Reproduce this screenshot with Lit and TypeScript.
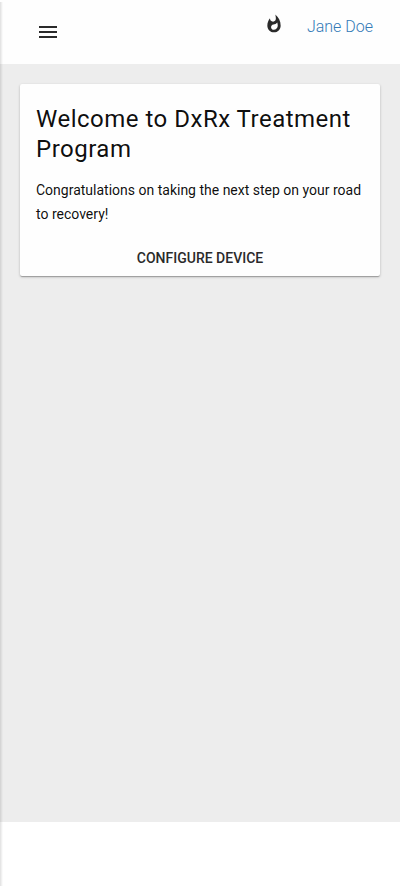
import { LitElement, html, css } from "lit";
import { customElement } from "lit/decorators.js";

@customElement("app-root")
export class AppRoot extends LitElement {
  static styles = css`
    :host { display: flex; flex-direction: column; position: relative; height: 886px; background: #fff; font-family: Roboto, sans-serif; overflow: hidden; box-sizing: border-box; }
    .edge { position: absolute; left: 0; top: 2px; bottom: 0; width: 3px; background: linear-gradient(90deg, rgba(0,0,0,.12), rgba(0,0,0,0)); }
    header { display: flex; align-items: flex-start; height: 64px; box-sizing: border-box; background: #fefefe; }
    .menu { margin: 20px 0 0 36px; }
    svg { display: block; width: 24px; height: 24px; fill: #2a2a2a; }
    .spacer { flex: 1; }
    .flame { margin-top: 14px; width: 20px; height: 20px; }
    .user { margin: 17px 27px 0 23px; font-size: 16px; line-height: 20px; font-weight: 300; color: #337ab7; text-decoration: none; }
    main { height: 758px; box-sizing: border-box; padding: 20px; background: #ededed; }
    .card { height: 192px; box-sizing: border-box; padding: 20px 16px 0; background: #fefefe; border-radius: 2px; box-shadow: 0 1px 3px rgba(0,0,0,.2), 0 1px 1px rgba(0,0,0,.14), 0 2px 1px -1px rgba(0,0,0,.12); display: flex; flex-direction: column; }
    h1 { margin: 0; font-size: 24px; line-height: 30px; font-weight: 400; letter-spacing: .5px; color: rgba(0,0,0,.95); }
    p { margin: 14px 0 0; font-size: 14px; line-height: 24px; color: rgba(0,0,0,.95); }
    .action { margin: 22px auto 0; padding: 0; border: 0; background: none; font: 500 14px/20px Roboto, sans-serif; color: #2a2a2a; text-transform: uppercase; }
  `;

  render() {
    return html`
      <header>
        <svg class="menu" viewBox="0 0 24 24"><path d="M3 18h18v-2H3v2zm0-5h18v-2H3v2zm0-7v2h18V6H3z"/></svg>
        <span class="spacer"></span>
        <svg class="flame" viewBox="0 0 24 24"><path d="M13.5.67s.74 2.65.74 4.8c0 2.06-1.35 3.73-3.41 3.73-2.07 0-3.63-1.67-3.63-3.73l.03-.36C5.21 7.51 4 10.62 4 14c0 4.42 3.58 8 8 8s8-3.58 8-8C20 8.61 17.41 3.8 13.5.67zM11.71 19c-1.78 0-3.22-1.4-3.22-3.14 0-1.62 1.05-2.76 2.81-3.12 1.77-.36 3.6-1.21 4.62-2.58.39 1.29.59 2.65.59 4.04 0 2.65-2.15 4.8-4.8 4.8z"/></svg>
        <a class="user">Jane Doe</a>
      </header>
      <main>
        <section class="card">
          <h1>Welcome to DxRx Treatment Program</h1>
          <p>Congratulations on taking the next step on your road to recovery!</p>
          <button class="action">Configure Device</button>
        </section>
      </main>
      <div class="edge"></div>
    `;
  }
}
